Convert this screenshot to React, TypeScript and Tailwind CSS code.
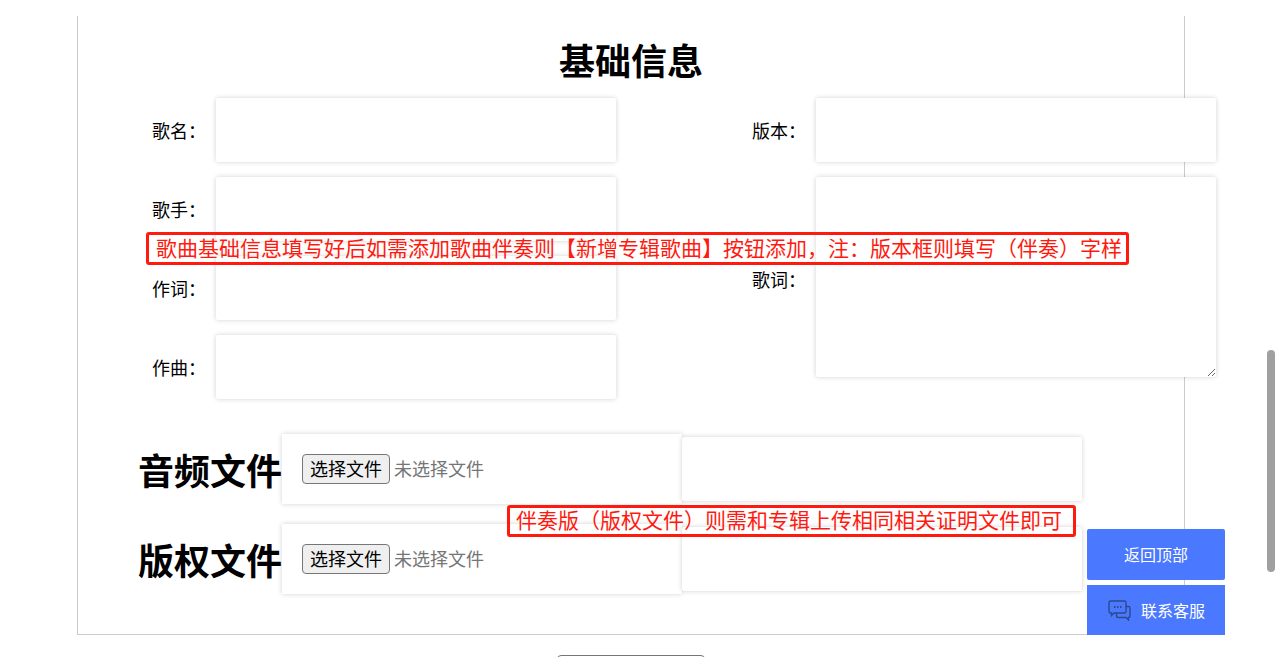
const inputBox = "h-16 w-[400px] rounded-[2px] bg-white shadow-[0_0_5px_rgba(0,0,0,0.18)]";

function Field({ label }: { label: string }) {
  return (
    <div className="flex items-center">
      <label className="w-[60px] pt-1 pl-4 text-[18px] leading-6 whitespace-nowrap">{label}</label>
      <input className={`ml-5 ${inputBox}`} />
    </div>
  );
}

function FileRow({ title }: { title: string }) {
  return (
    <div className="ml-[60px] flex items-center">
      <h2 className="w-[144px] pt-2 text-[36px] leading-[46px] font-bold whitespace-nowrap">{title}</h2>
      <div className="flex h-[70px] w-[400px] items-center bg-white pl-5 shadow-[0_0_5px_rgba(0,0,0,0.18)]">
        <button className="h-[30px] w-[88px] rounded-[4px] border border-[#767676] bg-[#efefef] pt-[2px] text-[18px] leading-none">
          选择文件
        </button>
        <span className="ml-1 pt-[2px] text-[18px] text-[#757575]">未选择文件</span>
      </div>
      <input className={inputBox} />
    </div>
  );
}

function ChatIcon() {
  return (
    <svg width="23" height="21" viewBox="0 0 23 21" fill="none" stroke="#2c4a8c" strokeWidth="1.4">
      <path d="M2.5 1h14a1.5 1.5 0 0 1 1.5 1.500v9a1.500 1.500 0 0 1-1.500 1.500H6l-2.500 2.500V13H2.500A1.500 1.500 0 0 1 1 11.500v-9A1.500 1.500 0 0 1 2.500 1z" />
      <path d="M18 6.500h2.500A1.500 1.500 0 0 1 22 8v8a1.500 1.500 0 0 1-1.500 1.500V20l-2.500-2.500h-8A1.500 1.500 0 0 1 8.500 16v-3" />
      <path d="M6 7h1.500M9 7h1.500M12 7h1.500" strokeWidth="1.800" />
    </svg>
  );
}

export default function App() {
  return (
    <div className="relative h-[657px] w-[1275px] overflow-hidden bg-white pt-4 font-['Liberation_Sans','Noto_Sans_CJK_SC',sans-serif] text-black">
      <div className="ml-[77px] h-[619px] w-[1108px] border-x border-b border-[#ccc] pt-6">
        <h1 className="mb-3 text-center text-[36px] leading-[46px] font-bold">基础信息</h1>

        <div className="ml-[58px] flex w-[1200px]">
          <div className="flex w-[600px] flex-col gap-[15px]">
            <Field label="歌名：" />
            <Field label="歌手：" />
            <Field label="作词：" />
            <Field label="作曲：" />
          </div>
          <div className="flex w-[600px] flex-col gap-[15px]">
            <Field label="版本：" />
            <div className="flex items-center">
              <label className="w-[60px] pt-2 pl-4 text-[18px] leading-6 whitespace-nowrap">歌词：</label>
              <textarea className="ml-5 h-[200px] w-[400px] rounded-[2px] bg-white shadow-[0_0_5px_rgba(0,0,0,0.18)]" />
            </div>
          </div>
        </div>

        <div className="mt-[35px] flex flex-col gap-5">
          <FileRow title="音频文件" />
          <FileRow title="版权文件" />
        </div>
      </div>

      <div className="mt-5 ml-[557px] h-6 w-[148px] rounded-[4px] border border-[#767676] bg-white" />

      {/* 标注框 */}
      <div className="absolute top-[232px] left-[146px] flex h-[33px] w-[983px] items-center rounded-[3px] border-[3px] border-[#ff1a0f] pl-[7px] text-[21px] whitespace-nowrap text-[#ff1a0f]">
        歌曲基础信息填写好后如需添加歌曲伴奏则【新增专辑歌曲】按钮添加，注：版本框则填写（伴奏）字样
      </div>
      <div className="absolute top-[505px] left-[507px] flex h-[32px] w-[569px] items-center rounded-[3px] border-[3px] border-[#ff1a0f] pl-[6px] text-[21px] whitespace-nowrap text-[#ff1a0f]">
        伴奏版（版权文件）则需和专辑上传相同相关证明文件即可
      </div>

      {/* 右侧悬浮按钮 */}
      <div className="absolute top-[529px] left-[1087px] flex w-[138px] flex-col gap-[5px] text-[16px] text-white">
        <button className="h-[51px] rounded-[2px] bg-[#4a78ff] pt-[3px]">返回顶部</button>
        <button className="flex h-[50px] items-center gap-[10px] bg-[#4a78ff] pl-[21px]">
          <ChatIcon />
          <span className="pt-[3px]">联系客服</span>
        </button>
      </div>

      {/* 滚动条 */}
      <div className="absolute top-[350px] left-[1267px] h-[222px] w-2 rounded-[4px] bg-[#a0a0a0]" />
    </div>
  );
}
